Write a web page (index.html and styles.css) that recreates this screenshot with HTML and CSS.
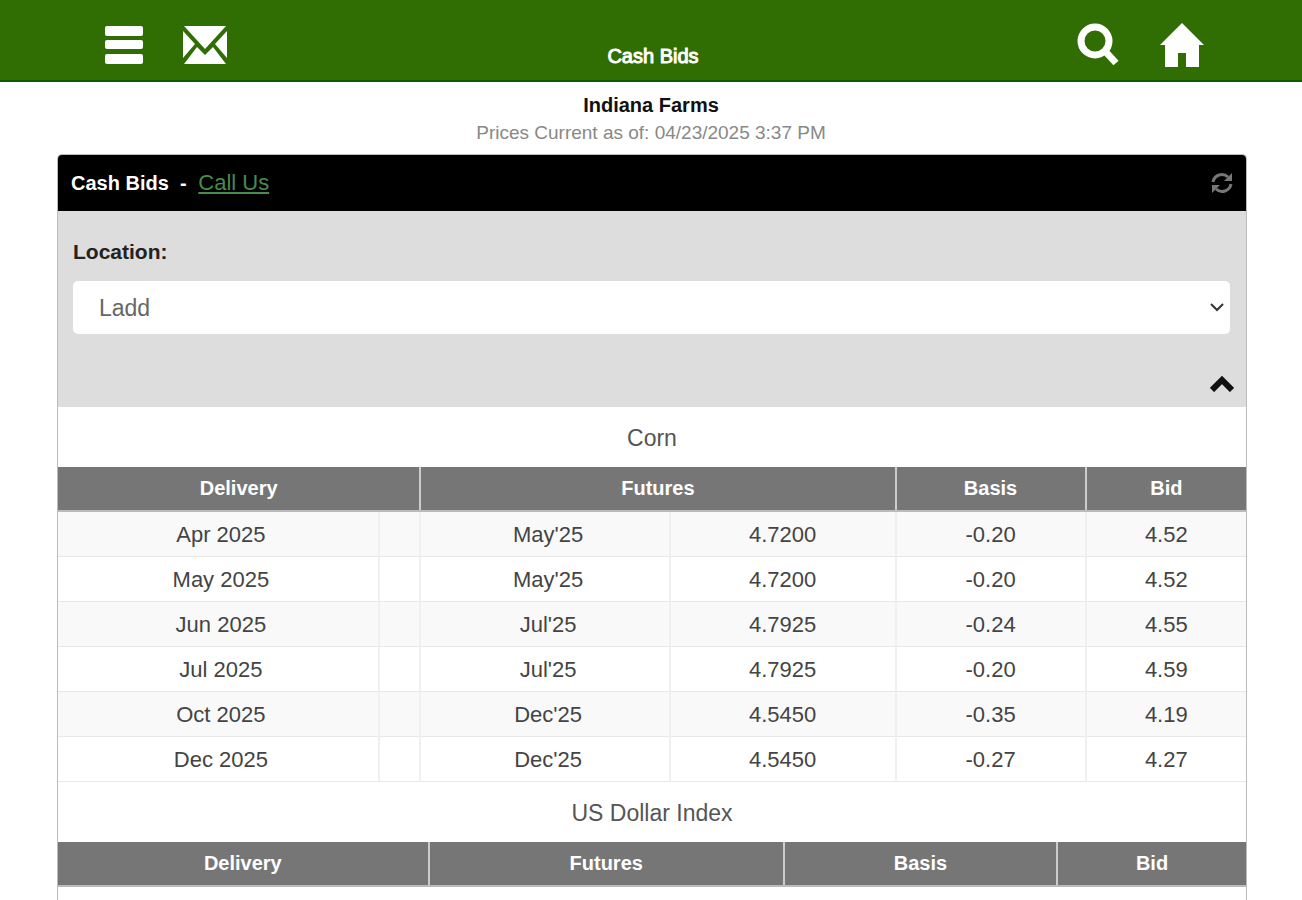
FILE: index.html
```html
<!DOCTYPE html>
<html lang="en">
<head>
<meta charset="utf-8">
<meta name="viewport" content="width=device-width, initial-scale=1">
<title>Cash Bids</title>
<link rel="stylesheet" href="styles.css">
</head>
<body>

<header class="topbar">
<div class="side">
<button type="button" class="ibtn" aria-label="Menu"><svg width="38" height="38" viewBox="0 0 38 38"><rect x="0" y="0" width="38" height="10" rx="2"/><rect x="0" y="14" width="38" height="9" rx="2"/><rect x="0" y="28" width="38" height="10" rx="2"/></svg></button>
<a class="ibtn" href="#" aria-label="Mail"><svg width="44" height="38" viewBox="0 0 44 38"><path d="M1 0H43L22 23Z"/><path d="M0 5L12 18L0 32Z"/><path d="M44 5L32 18L44 32Z"/><path d="M1 38L14 21L22 29L30 21L43 38Z"/></svg></a>
</div>
<h1>Cash Bids</h1>
<div class="side right">
<button type="button" class="ibtn" aria-label="Search"><svg width="44" height="44" viewBox="0 0 44 44"><circle cx="19" cy="18" r="14" fill="none" stroke="#fff" stroke-width="7"/><path d="M28 27L40 40" stroke="#fff" stroke-width="7"/></svg></button>
<a class="ibtn" href="#" aria-label="Home"><svg width="44" height="44" viewBox="0 0 44 44"><path d="M22 0L44 22H39V44H26V30H18V44H5V22H0Z"/></svg></a>
</div>
</header>

<div class="info">
<h2>Indiana Farms</h2>
<p>Prices Current as of: 04/23/2025 3:37 PM</p>
</div>

<main class="panel">
<div class="phead">
<span><b>Cash Bids &nbsp;-&nbsp;</b> <a href="#">Call Us</a></span>
<button type="button" class="ibtn" aria-label="Refresh"><svg width="22" height="22" viewBox="0 0 22 22"><g fill="none" stroke="#777" stroke-width="3"><path d="M2 10A9 9 0 0 1 17 5"/><path d="M20 12A9 9 0 0 1 5 17"/></g><path d="M21 1V9H13Z" fill="#777"/><path d="M1 21V13H9Z" fill="#777"/></svg></button>
</div>

<div class="filter">
<label for="loc">Location:</label>
<div class="pick">
<select id="loc"><option>Ladd</option></select>
<svg class="arrow" width="14" height="9" viewBox="0 0 14 9"><path d="M1 1L7 7L13 1" fill="none" stroke="#333" stroke-width="2"/></svg>
</div>
<button type="button" class="ibtn fold" aria-label="Collapse"><svg width="24" height="16" viewBox="0 0 24 16"><path d="M2 14L12 4L22 14" fill="none" stroke="#111" stroke-width="6"/></svg></button>
</div>

<table class="bids">
<caption>Corn</caption>
<colgroup><col class="c-del"><col class="c-gap"><col class="c-fut"><col class="c-price"><col class="c-basis"><col class="c-bid"></colgroup>
<thead>
<tr><th colspan="2">Delivery</th><th colspan="2">Futures</th><th>Basis</th><th>Bid</th></tr>
</thead>
<tbody>
<tr><td>Apr 2025</td><td></td><td>May'25</td><td>4.7200</td><td>-0.20</td><td>4.52</td></tr>
<tr><td>May 2025</td><td></td><td>May'25</td><td>4.7200</td><td>-0.20</td><td>4.52</td></tr>
<tr><td>Jun 2025</td><td></td><td>Jul'25</td><td>4.7925</td><td>-0.24</td><td>4.55</td></tr>
<tr><td>Jul 2025</td><td></td><td>Jul'25</td><td>4.7925</td><td>-0.20</td><td>4.59</td></tr>
<tr><td>Oct 2025</td><td></td><td>Dec'25</td><td>4.5450</td><td>-0.35</td><td>4.19</td></tr>
<tr><td>Dec 2025</td><td></td><td>Dec'25</td><td>4.5450</td><td>-0.27</td><td>4.27</td></tr>
</tbody>
</table>

<table class="bids">
<caption>US Dollar Index</caption>
<colgroup><col class="d-del"><col class="d-fut"><col class="d-basis"><col class="d-bid"></colgroup>
<thead>
<tr><th>Delivery</th><th>Futures</th><th>Basis</th><th>Bid</th></tr>
</thead>
</table>
</main>

</body>
</html>
```

FILE: styles.css
```css
*{box-sizing:border-box;}
html,body{height:100%;}
body{display:flex;flex-direction:column;margin:0;font-family:"Liberation Sans",Arial,sans-serif;font-size:22px;color:#444;background:#fff;}
h1,h2,p{margin:0;font-weight:normal;}

.topbar{display:grid;flex:none;grid-template-columns:1fr auto 1fr;align-items:center;height:82px;padding:10px 98px 0 102px;background:#306d03;border-bottom:2px solid #0a5a06;color:#fff;}
.topbar h1{font-size:20px;line-height:24px;padding-top:22px;-webkit-text-stroke:1px #fff;}
.side{display:flex;align-items:center;gap:40px;padding-left:3px;}
.right{justify-content:flex-end;}
.ibtn{display:flex;padding:0;border:none;background:none;cursor:pointer;}
.ibtn svg{fill:#fff;}

.info{padding:10px 0 6px;text-align:center;}
.info h2{font-size:20px;line-height:26px;font-weight:bold;color:#111;}
.info p{font-size:19px;line-height:30px;color:#888;}

.panel{flex:1 0 auto;margin:0 55px 0 57px;border:1px solid #bbb;border-bottom:none;border-radius:5px 5px 0 0;}
.phead{display:flex;justify-content:space-between;align-items:center;height:56px;padding:0 13px;border-radius:4px 4px 0 0;background:#000;color:#fff;}
.phead b{font-size:20px;}
.phead a{color:#4a8a4a;}
.filter{padding:27px 16px 15px 15px;background:#ddd;}
.filter label{display:block;font-size:21px;line-height:28px;font-weight:bold;color:#222;}
.pick{display:grid;align-items:center;margin:15px 0 42px;}
.pick select{grid-area:1/1;width:100%;height:53px;padding:0 26px;border:none;border-radius:5px;background:#fff;color:#666;font:inherit;font-size:23px;appearance:none;}
.arrow{grid-area:1/1;justify-self:end;margin-right:6px;pointer-events:none;}
.fold{margin:0 -4px 0 auto;}

.bids{width:100%;table-layout:fixed;border-collapse:collapse;}
.bids caption{height:60px;font-size:23px;line-height:62px;color:#555;}
.bids th{height:44px;padding:0;background:#767676;border-left:2px solid #ccc;border-bottom:2px solid #bbb;font-size:20px;color:#fff;}
.bids td{height:45px;padding:2px 0 0;text-align:center;border-left:2px solid #f0f0f0;border-bottom:1px solid #e8e8e8;}
.bids td:first-child,.bids td:nth-child(3){padding-left:6px;}
.bids th:first-child,.bids td:first-child{border-left:none;}
.bids tbody tr:nth-child(odd){background:#f9f9f9;}
.c-del{width:27%;}
.c-gap{width:3.5%;}
.c-fut{width:21%;}
.c-price{width:19%;}
.c-basis{width:16%;}
.c-bid{width:13.5%;}
.d-del{width:31.2%;}
.d-fut{width:29.9%;}
.d-basis{width:23%;}
.d-bid{width:15.9%;}
```
